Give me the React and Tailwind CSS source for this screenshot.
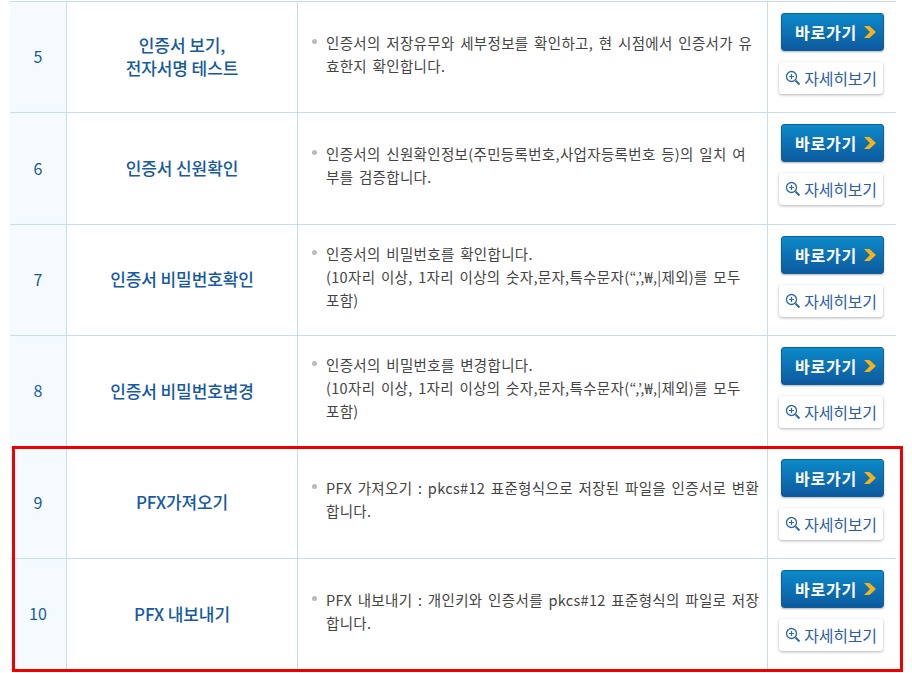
const rows = [
  {
    no: "5",
    title: ["인증서 보기,", "전자서명 테스트"],
    desc: ["인증서의 저장유무와 세부정보를 확인하고, 현 시점에서 인증서가 유", "효한지 확인합니다."],
  },
  {
    no: "6",
    title: ["인증서 신원확인"],
    desc: ["인증서의 신원확인정보(주민등록번호,사업자등록번호 등)의 일치 여", "부를 검증합니다."],
  },
  {
    no: "7",
    title: ["인증서 비밀번호확인"],
    desc: ["인증서의 비밀번호를 확인합니다.", "(10자리 이상, 1자리 이상의 숫자,문자,특수문자(“,’,₩,|제외)를 모두", "포함)"],
  },
  {
    no: "8",
    title: ["인증서 비밀번호변경"],
    desc: ["인증서의 비밀번호를 변경합니다.", "(10자리 이상, 1자리 이상의 숫자,문자,특수문자(“,’,₩,|제외)를 모두", "포함)"],
  },
  {
    no: "9",
    title: ["PFX가져오기"],
    desc: ["PFX 가져오기 : pkcs#12 표준형식으로 저장된 파일을 인증서로 변환", "합니다."],
  },
  {
    no: "10",
    title: ["PFX 내보내기"],
    desc: ["PFX 내보내기 : 개인키와 인증서를 pkcs#12 표준형식의 파일로 저장", "합니다."],
  },
];

function Row({ row }) {
  return (
    <div className="grid grid-cols-[57px_231px_470px_128px] h-[111.4px] border-b border-[#c5dfe8]">
      <div className="bg-[#f4fafd] border-r border-[#c5dfe8] flex items-center justify-center text-[16px] text-[#1a5a9c] pb-[2px]">
        {row.no}
      </div>
      <div className="border-r border-[#c5dfe8] flex flex-col items-center justify-center pb-[2px] text-[17px] leading-[23px] font-medium tracking-[-0.1px] text-[#165a9f]">
        {row.title.map((line) => (
          <div key={line}>{line}</div>
        ))}
      </div>
      <div className="border-r border-[#c5dfe8] pl-[14px] pb-[7px] flex items-center text-[14.5px] leading-[23px] tracking-[0.33px] [word-spacing:2px] text-[#444444] whitespace-nowrap">
        <div className="relative pl-[14px]">
          <span className="absolute left-0 top-[8px] w-[5px] h-[5px] rounded-full bg-[#bbbbbb]" />
          {row.desc.map((line) => (
            <div key={line}>{line}</div>
          ))}
        </div>
      </div>
      <div className="pl-[13px] pt-[11px] flex flex-col items-start">
        <button className="w-[103px] h-[38px] pl-[13px] rounded-[3px] bg-gradient-to-b from-[#0c8ac9] to-[#0d5a9e] border border-[#0d5f9f] shadow-[0_1px_2px_rgba(0,0,0,0.3)] flex items-center gap-[6px] text-white text-[16px] font-bold tracking-[0.8px]">
          바로가기
          <svg width="14" height="14" viewBox="0 0 14 14">
            <path d="M1 1h5.5l6.5 6-6.5 6H1l6-6z" fill="#f5b21a" />
          </svg>
        </button>
        <button className="mt-[11px] w-[104px] h-[32px] -ml-[2px] rounded-[3px] bg-white shadow-[0_1px_3px_rgba(0,0,0,0.3)] flex items-center justify-center gap-[3px] text-[#2b5ea8] text-[16px] tracking-[-0.2px]">
          <svg width="16" height="16" viewBox="0 0 16 16" fill="none" stroke="#2b6aa8">
            <circle cx="6.5" cy="6.5" r="5" strokeWidth="1.3" />
            <path d="M6.5 4v5M4 6.5h5" strokeWidth="1.2" />
            <path d="M10.5 10.5l4 4" strokeWidth="2" />
          </svg>
          자세히보기
        </button>
      </div>
    </div>
  );
}

export default function App() {
  return (
    <div className="relative h-[673px] w-[912px] overflow-hidden bg-white pl-[10px] pt-[1px] font-['Noto_Sans_CJK_KR','Noto_Sans',sans-serif]">
      <div className="w-[886px] border-t border-[#c5dfe8]">
        {rows.map((row) => (
          <Row key={row.no} row={row} />
        ))}
      </div>
      {/* 빨간 강조 박스 */}
      <div className="absolute left-[12px] top-[446px] w-[891px] h-[226px] border-[3px] border-[#ee0000]" />
    </div>
  );
}
